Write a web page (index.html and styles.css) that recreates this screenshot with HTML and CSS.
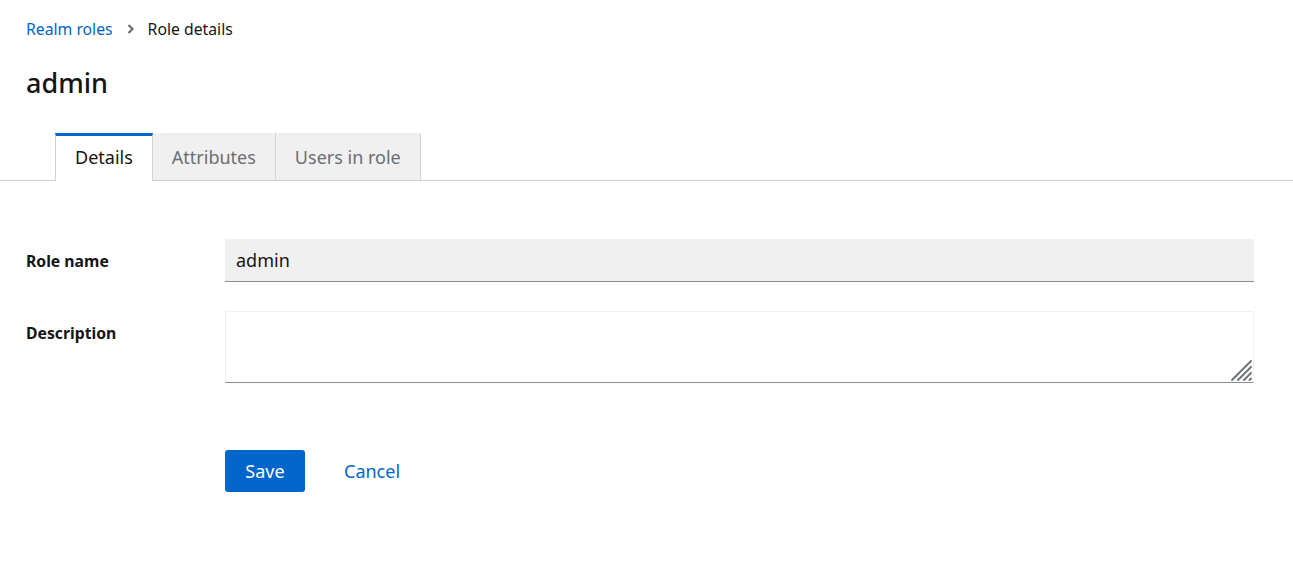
FILE: index.html
```html
<!doctype html>
<html lang="en">
  <head>
    <meta charset="UTF-8" />
    <meta name="viewport" content="width=device-width, initial-scale=1.0" />
    <title>Role details</title>
    <link rel="stylesheet" href="styles.css">
  </head>

  <body>
    <section class="page-header">
      <nav class="breadcrumb">
        <a href="#">Realm roles</a>
        <span class="chevron">
          <svg width="8" height="10" viewBox="0 0 8 10"><path d="M1.5 1 L5.5 5 L1.5 9" fill="none" stroke="#6a6e73" stroke-width="2.2" /></svg>
        </span>
        <span class="current">Role details</span>
      </nav>
      <h1 class="title">admin</h1>
    </section>

    <div class="tabs">
      <button class="tab active">Details</button>
      <button class="tab">Attributes</button>
      <button class="tab">Users in role</button>
    </div>

    <form class="role-form">
      <div class="group">
        <label for="role-name">Role name</label>
        <input id="role-name" class="input" type="text" value="admin" readonly />
      </div>
      <div class="group">
        <label for="description">Description</label>
        <div class="textarea-wrap">
          <textarea id="description" class="textarea"></textarea>
          <!-- resize grip -->
          <svg class="grip" width="22" height="22" viewBox="0 0 22 22">
            <g stroke="#6a6e73" stroke-width="1.8" stroke-linecap="round">
              <path d="M2 21 L21 2" />
              <path d="M8 21 L21 8" />
              <path d="M14 21 L21 14" />
              <path d="M19.5 21 L21 19.5" />
            </g>
          </svg>
        </div>
      </div>
      <div class="actions">
        <button type="button" class="btn primary">Save</button>
        <button type="button" class="btn link">Cancel</button>
      </div>
    </form>
  </body>
</html>
```

FILE: styles.css
```css
* {
  margin: 0;
  padding: 0;
  box-sizing: border-box;
}
:root {
  --blue: #0066cc;
  --text: #151515;
  --muted: #6a6e73;
  --line: #d2d2d2;
  --fill: #f0f0f0;
  --underline: #8a8d90;
}
body {
  background-color: #fff;
  color: var(--text);
  font-family: "Noto Sans", "Open Sans", sans-serif;
  font-size: 18px;
}
a {
  text-decoration: none;
  color: var(--blue);
}
.page-header {
  padding: 17px 26px 0;
}
.breadcrumb {
  display: flex;
  align-items: center;
  font-size: 15.75px;
  line-height: 24px;
}
.breadcrumb .chevron {
  display: flex;
  margin: 0 13px 0 14px;
}
.title {
  margin-top: 24px;
  font-size: 27px;
  font-weight: 500;
  line-height: 35px;
}
.tabs {
  display: flex;
  margin-top: 33px;
  padding-left: 55px;
  border-bottom: 1px solid var(--line);
}
.tab {
  font: inherit;
  height: 47px;
  padding: 0 19px;
  margin-bottom: -1px;
  background-color: var(--fill);
  color: var(--muted);
  border: none;
  border-right: 1px solid var(--line);
  cursor: pointer;
}
.tab.active {
  height: 48px;
  padding-bottom: 4px;
  background-color: #fff;
  color: var(--text);
  border-top: 3px solid var(--blue);
  border-left: 1px solid var(--line);
}
.role-form {
  padding: 58px 39px 0 26px;
}
.group {
  display: grid;
  grid-template-columns: 199px 1fr;
  margin-bottom: 29px;
}
.group label {
  font-size: 15.75px;
  font-weight: 700;
  line-height: 24px;
  padding-top: 10px;
}
.input {
  font: inherit;
  height: 43px;
  padding: 0 11px;
  border: none;
  border-bottom: 1px solid var(--underline);
  background-color: var(--fill);
  color: var(--text);
  outline: none;
}
.textarea-wrap {
  position: relative;
  display: flex;
}
.textarea {
  flex: 1;
  font: inherit;
  height: 72px;
  padding: 8px 11px;
  border: 1px solid var(--fill);
  border-bottom-color: var(--underline);
  resize: none;
  outline: none;
}
.grip {
  position: absolute;
  right: 2px;
  bottom: 2px;
}
.actions {
  display: flex;
  align-items: center;
  margin-top: 67px;
  padding-left: 199px;
}
.btn {
  font: inherit;
  line-height: 24px;
  border: none;
  border-radius: 3px;
  cursor: pointer;
}
.btn.primary {
  height: 42px;
  width: 80px;
  background-color: var(--blue);
  color: #fff;
}
.btn.link {
  margin-left: 23px;
  padding: 0 16px;
  height: 42px;
  background: none;
  color: var(--blue);
}
```
